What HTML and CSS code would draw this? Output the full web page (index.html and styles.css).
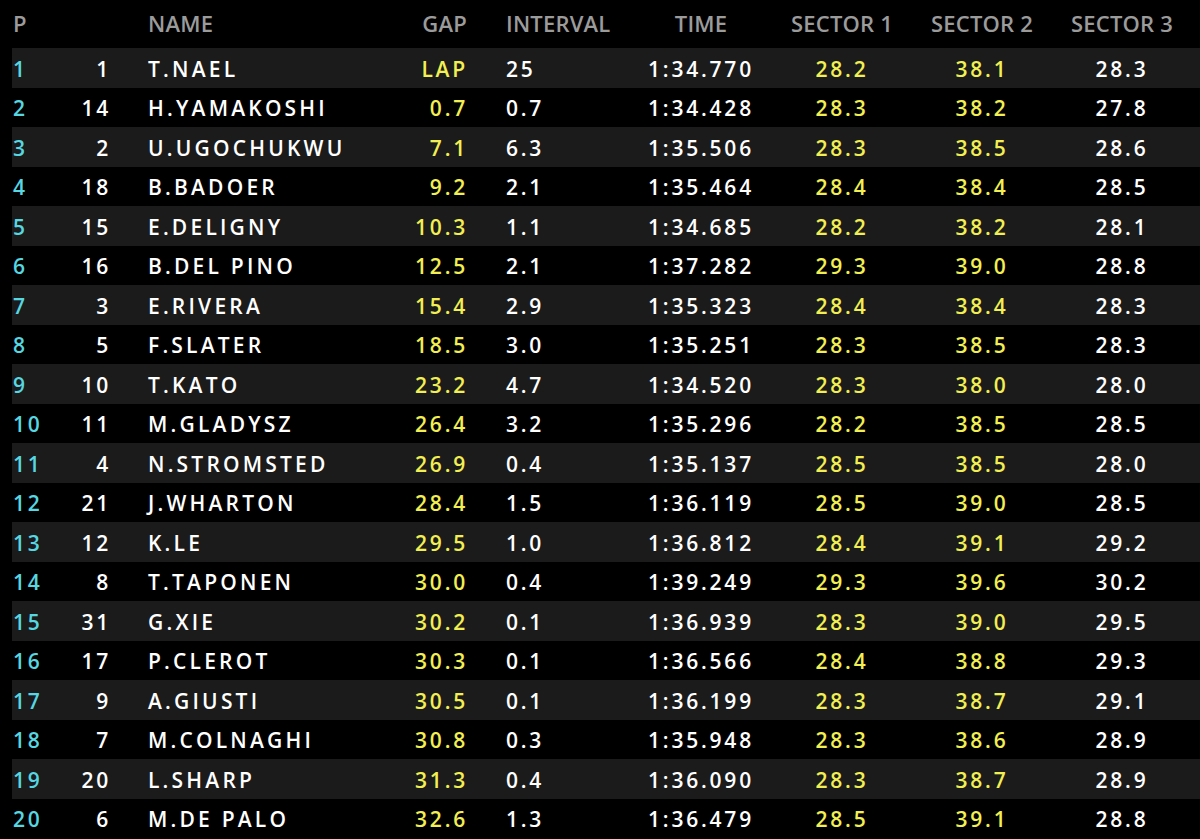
FILE: index.html
```html
<!DOCTYPE html>
<html>
<head>
<meta charset="utf-8">
<link rel="stylesheet" href="styles.css">
</head>
<body>
<div class="board">
  <div class="row head">
    <div class="c pos">P</div>
    <div class="c num"></div>
    <div class="c name">NAME</div>
    <div class="c gap">GAP</div>
    <div class="c int">INTERVAL</div>
    <div class="c time">TIME</div>
    <div class="c sec">SECTOR 1</div>
    <div class="c sec">SECTOR 2</div>
    <div class="c sec">SECTOR 3</div>
  </div>
  <div class="row odd"><div class="c pos">1</div><div class="c num">1</div><div class="c name">T.NAEL</div><div class="c gap">LAP</div><div class="c int">25</div><div class="c time">1:34.770</div><div class="c sec y">28.2</div><div class="c sec y">38.1</div><div class="c sec">28.3</div></div>
  <div class="row"><div class="c pos">2</div><div class="c num">14</div><div class="c name">H.YAMAKOSHI</div><div class="c gap">0.7</div><div class="c int">0.7</div><div class="c time">1:34.428</div><div class="c sec y">28.3</div><div class="c sec y">38.2</div><div class="c sec">27.8</div></div>
  <div class="row odd"><div class="c pos">3</div><div class="c num">2</div><div class="c name">U.UGOCHUKWU</div><div class="c gap">7.1</div><div class="c int">6.3</div><div class="c time">1:35.506</div><div class="c sec y">28.3</div><div class="c sec y">38.5</div><div class="c sec">28.6</div></div>
  <div class="row"><div class="c pos">4</div><div class="c num">18</div><div class="c name">B.BADOER</div><div class="c gap">9.2</div><div class="c int">2.1</div><div class="c time">1:35.464</div><div class="c sec y">28.4</div><div class="c sec y">38.4</div><div class="c sec">28.5</div></div>
  <div class="row odd"><div class="c pos">5</div><div class="c num">15</div><div class="c name">E.DELIGNY</div><div class="c gap">10.3</div><div class="c int">1.1</div><div class="c time">1:34.685</div><div class="c sec y">28.2</div><div class="c sec y">38.2</div><div class="c sec">28.1</div></div>
  <div class="row"><div class="c pos">6</div><div class="c num">16</div><div class="c name">B.DEL PINO</div><div class="c gap">12.5</div><div class="c int">2.1</div><div class="c time">1:37.282</div><div class="c sec y">29.3</div><div class="c sec y">39.0</div><div class="c sec">28.8</div></div>
  <div class="row odd"><div class="c pos">7</div><div class="c num">3</div><div class="c name">E.RIVERA</div><div class="c gap">15.4</div><div class="c int">2.9</div><div class="c time">1:35.323</div><div class="c sec y">28.4</div><div class="c sec y">38.4</div><div class="c sec">28.3</div></div>
  <div class="row"><div class="c pos">8</div><div class="c num">5</div><div class="c name">F.SLATER</div><div class="c gap">18.5</div><div class="c int">3.0</div><div class="c time">1:35.251</div><div class="c sec y">28.3</div><div class="c sec y">38.5</div><div class="c sec">28.3</div></div>
  <div class="row odd"><div class="c pos">9</div><div class="c num">10</div><div class="c name">T.KATO</div><div class="c gap">23.2</div><div class="c int">4.7</div><div class="c time">1:34.520</div><div class="c sec y">28.3</div><div class="c sec y">38.0</div><div class="c sec">28.0</div></div>
  <div class="row"><div class="c pos">10</div><div class="c num">11</div><div class="c name">M.GLADYSZ</div><div class="c gap">26.4</div><div class="c int">3.2</div><div class="c time">1:35.296</div><div class="c sec y">28.2</div><div class="c sec y">38.5</div><div class="c sec">28.5</div></div>
  <div class="row odd"><div class="c pos">11</div><div class="c num">4</div><div class="c name">N.STROMSTED</div><div class="c gap">26.9</div><div class="c int">0.4</div><div class="c time">1:35.137</div><div class="c sec y">28.5</div><div class="c sec y">38.5</div><div class="c sec">28.0</div></div>
  <div class="row"><div class="c pos">12</div><div class="c num">21</div><div class="c name">J.WHARTON</div><div class="c gap">28.4</div><div class="c int">1.5</div><div class="c time">1:36.119</div><div class="c sec y">28.5</div><div class="c sec y">39.0</div><div class="c sec">28.5</div></div>
  <div class="row odd"><div class="c pos">13</div><div class="c num">12</div><div class="c name">K.LE</div><div class="c gap">29.5</div><div class="c int">1.0</div><div class="c time">1:36.812</div><div class="c sec y">28.4</div><div class="c sec y">39.1</div><div class="c sec">29.2</div></div>
  <div class="row"><div class="c pos">14</div><div class="c num">8</div><div class="c name">T.TAPONEN</div><div class="c gap">30.0</div><div class="c int">0.4</div><div class="c time">1:39.249</div><div class="c sec y">29.3</div><div class="c sec y">39.6</div><div class="c sec">30.2</div></div>
  <div class="row odd"><div class="c pos">15</div><div class="c num">31</div><div class="c name">G.XIE</div><div class="c gap">30.2</div><div class="c int">0.1</div><div class="c time">1:36.939</div><div class="c sec y">28.3</div><div class="c sec y">39.0</div><div class="c sec">29.5</div></div>
  <div class="row"><div class="c pos">16</div><div class="c num">17</div><div class="c name">P.CLEROT</div><div class="c gap">30.3</div><div class="c int">0.1</div><div class="c time">1:36.566</div><div class="c sec y">28.4</div><div class="c sec y">38.8</div><div class="c sec">29.3</div></div>
  <div class="row odd"><div class="c pos">17</div><div class="c num">9</div><div class="c name">A.GIUSTI</div><div class="c gap">30.5</div><div class="c int">0.1</div><div class="c time">1:36.199</div><div class="c sec y">28.3</div><div class="c sec y">38.7</div><div class="c sec">29.1</div></div>
  <div class="row"><div class="c pos">18</div><div class="c num">7</div><div class="c name">M.COLNAGHI</div><div class="c gap">30.8</div><div class="c int">0.3</div><div class="c time">1:35.948</div><div class="c sec y">28.3</div><div class="c sec y">38.6</div><div class="c sec">28.9</div></div>
  <div class="row odd"><div class="c pos">19</div><div class="c num">20</div><div class="c name">L.SHARP</div><div class="c gap">31.3</div><div class="c int">0.4</div><div class="c time">1:36.090</div><div class="c sec y">28.3</div><div class="c sec y">38.7</div><div class="c sec">28.9</div></div>
  <div class="row"><div class="c pos">20</div><div class="c num">6</div><div class="c name">M.DE PALO</div><div class="c gap">32.6</div><div class="c int">1.3</div><div class="c time">1:36.479</div><div class="c sec y">28.5</div><div class="c sec y">39.1</div><div class="c sec">28.8</div></div>
</div>
</body>
</html>
```
FILE: styles.css
```css
html, body {
  margin: 0;
  padding: 0;
  background: #000;
}
body {
  font-family: "Open Sans", "DejaVu Sans", sans-serif;
  font-weight: 600;
  color: #fff;
  overflow: hidden;
}
.board {
  padding-left: 12px;
  display: flex;
  flex-direction: column;
}
.row {
  display: grid;
  grid-template-columns: 48px 48px 292px 67px 163px 142px 140px 140px 140px;
  height: 39.5px;
  align-items: center;
  font-size: 21px;
  letter-spacing: 2.8px;
  white-space: nowrap;
}
.row.odd {
  background: #1b1b1b;
}
.row.head {
  height: 48px;
  font-size: 22px;
  letter-spacing: 0.2px;
  color: #9b9b9b;
}
.c {
  line-height: 1;
  padding-top: 3px;
}
.head .c {
  padding-top: 0;
  margin-top: -2px;
}
.pos {
  padding-left: 1px;
  color: #56d7e2;
}
.head .pos {
  color: #9b9b9b;
}
.num {
  text-align: right;
  margin-right: -3px;
}
.name {
  padding-left: 40px;
  letter-spacing: 3.2px;
}
.head .name {
  letter-spacing: 0.2px;
}
.gap {
  text-align: right;
  color: #f2ef52;
  margin-right: -1px;
}
.head .gap {
  color: #9b9b9b;
  margin-right: 0;
}
.int {
  padding-left: 39px;
}
.time, .sec {
  text-align: center;
}
.y {
  color: #f2ef52;
}
```
